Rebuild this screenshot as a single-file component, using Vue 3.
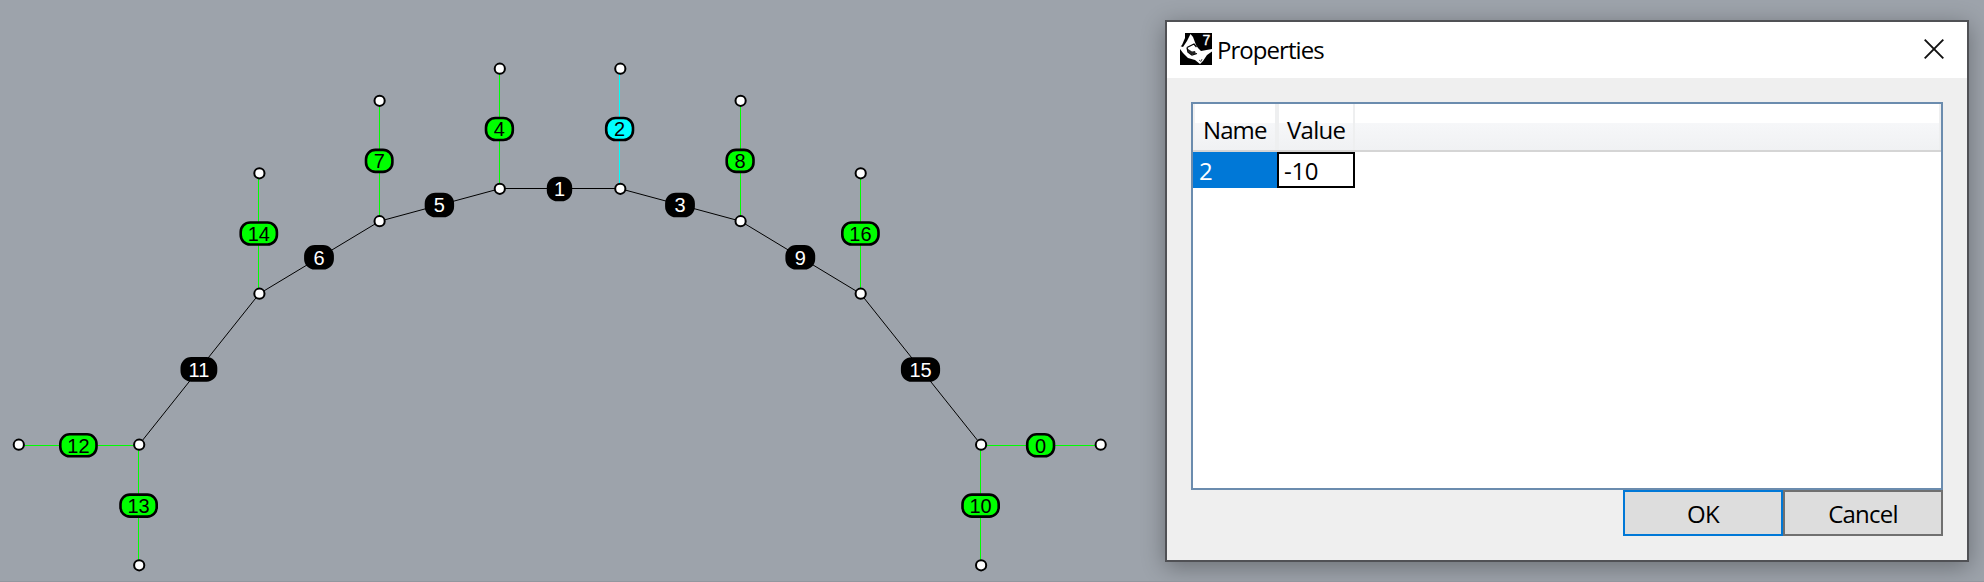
<script setup>
const lines = [
  { x1: 18.7, y1: 445.5, x2: 139, y2: 445.5, kind: 'load' },
  { x1: 138.5, y1: 445, x2: 138.5, y2: 565, kind: 'load' },
  { x1: 258.5, y1: 173, x2: 258.5, y2: 294, kind: 'load' },
  { x1: 379.5, y1: 101, x2: 379.5, y2: 221, kind: 'load' },
  { x1: 499.5, y1: 69, x2: 499.5, y2: 189, kind: 'load' },
  { x1: 619.5, y1: 69, x2: 619.5, y2: 189, kind: 'picked' },
  { x1: 740.5, y1: 101, x2: 740.5, y2: 221, kind: 'load' },
  { x1: 860.5, y1: 173, x2: 860.5, y2: 294, kind: 'load' },
  { x1: 980.5, y1: 445, x2: 980.5, y2: 565, kind: 'load' },
  { x1: 981, y1: 445.5, x2: 1100, y2: 445.5, kind: 'load' },
  { x1: 139, y1: 444.7, x2: 259.3, y2: 293.7, kind: 'edge' },
  { x1: 259.3, y1: 293.7, x2: 379.7, y2: 221.2, kind: 'edge' },
  { x1: 379.7, y1: 221.2, x2: 499.8, y2: 188.7, kind: 'edge' },
  { x1: 499.8, y1: 188.5, x2: 620.2, y2: 188.5, kind: 'edge' },
  { x1: 620.2, y1: 188.7, x2: 740.6, y2: 221.2, kind: 'edge' },
  { x1: 740.6, y1: 221.2, x2: 860.6, y2: 293.7, kind: 'edge' },
  { x1: 860.6, y1: 293.7, x2: 981, y2: 444.7, kind: 'edge' }
]
const nodes = [
  [18.8, 444.7], [139.2, 444.7], [139.2, 565.3], [259.4, 173.3], [259.4, 293.7],
  [379.6, 100.8], [379.6, 221.2], [499.8, 68.7], [499.8, 188.8], [620.3, 68.7],
  [620.3, 188.8], [740.6, 100.8], [740.6, 221.2], [860.7, 173.3], [860.7, 293.7],
  [981.1, 444.7], [981.1, 565.3], [1100.7, 444.7]
]
const labels = [
  { t: '12', x: 78.4, y: 445.3, w: 38.8, k: 'load' },
  { t: '13', x: 138.6, y: 505.6, w: 38.8, k: 'load' },
  { t: '14', x: 258.8, y: 233.5, w: 38.8, k: 'load' },
  { t: '7', x: 379.2, y: 160.9, w: 29, k: 'load' },
  { t: '4', x: 499.4, y: 129, w: 29.4, k: 'load' },
  { t: '2', x: 619.6, y: 129, w: 29.4, k: 'picked' },
  { t: '8', x: 740.1, y: 160.9, w: 29.4, k: 'load' },
  { t: '16', x: 860.4, y: 233.5, w: 38.8, k: 'load' },
  { t: '10', x: 980.6, y: 505.6, w: 38.8, k: 'load' },
  { t: '0', x: 1040.6, y: 445.3, w: 29.4, k: 'load' },
  { t: '11', x: 198.9, y: 369.4, w: 36.8, k: 'edge' },
  { t: '6', x: 319, y: 257.3, w: 29.8, k: 'edge' },
  { t: '5', x: 439.4, y: 205, w: 29.4, k: 'edge' },
  { t: '1', x: 559.5, y: 189, w: 25.4, k: 'edge' },
  { t: '3', x: 680, y: 205, w: 29.8, k: 'edge' },
  { t: '9', x: 800.3, y: 257.3, w: 29.8, k: 'edge' },
  { t: '15', x: 920.5, y: 369.5, w: 39.2, k: 'edge' }
]
</script>

<template>
  <main class="viewport">
    <svg class="graph" width="1984" height="582" viewBox="0 0 1984 582">
      <line v-for="(l, i) in lines" :key="'l' + i" :x1="l.x1" :y1="l.y1" :x2="l.x2" :y2="l.y2" :class="['line', l.kind]" />
      <circle v-for="(n, i) in nodes" :key="'n' + i" :cx="n[0]" :cy="n[1]" r="5.1" class="node" />
      <g v-for="l in labels" :key="l.t" :class="['tag', l.k]">
        <rect :x="l.x - l.w / 2 + 1.3" :y="l.y - 11" :width="l.w - 2.6" height="22" rx="9.4" />
        <text :x="l.x" :y="l.y + 7.4">{{ l.t }}</text>
      </g>
    </svg>

    <section class="dialog">
      <header class="titlebar">
        <svg class="logo" width="32" height="32" viewBox="0 0 32 32">
          <rect width="32" height="32" fill="#000" />
          <path d="M0 0H5L5 5 2 12 0 14Z" fill="#fff" />
          <path d="M10.5 1L13 4 16 12 18 15 21 18 32 16V18.5L27 22 23 28 20 31 15 27 8 25 3 20 0 16V13L3 14 7 8 9 4Z" fill="#fff" />
          <path d="M7 14.5L14 11 16.5 14M7 14.5L8 19 12 22 17 20.5" fill="none" stroke="#000" stroke-width="1.3" />
          <path d="M8 16L12 18.5 15 18 16 21 11 21.5 8 19Z" fill="#222" />
          <path d="M19 27L21 28.5 22 26" fill="none" stroke="#555" stroke-width="1" />
          <text x="22.6" y="12" class="logo-num">7</text>
        </svg>
        <h1 class="title">Properties</h1>
        <svg class="close" width="20" height="20" viewBox="0 0 20 20">
          <path d="M.7.7L19.3 19.3M19.3.7L.7 19.3" fill="none" stroke="#111" stroke-width="1.9" />
        </svg>
      </header>
      <div class="content">
        <div class="grid">
          <div class="head">
            <div class="col name"><span class="t-name">Name</span></div>
            <div class="col value"><span class="t-value">Value</span></div>
            <div class="col rest"></div>
          </div>
          <div class="row">
            <div class="cell selected">2</div>
            <div class="cell editing">-10</div>
          </div>
        </div>
        <footer class="actions">
          <button class="btn ok">OK</button>
          <button class="btn cancel">Cancel</button>
        </footer>
      </div>
    </section>
  </main>
</template>

<style>
body { background: #9da3ab; overflow: hidden; }
</style>

<style scoped>
.viewport {
  position: relative;
  box-sizing: border-box;
  width: 1984px;
  height: 582px;
  overflow: hidden;
  background: #9da3ab;
  border-bottom: 1px solid #92979f;
  font-family: "Open Sans", "Noto Sans", sans-serif;
}
.graph { display: block; }
.line { stroke-width: 1; }
.line.load { stroke: #00ff00; }
.line.picked { stroke: #00ffff; }
.line.edge { stroke: #000; }
.node { fill: #fff; stroke: #000; stroke-width: 2; }
.tag rect { stroke: #000; stroke-width: 2.6; }
.tag text { font: 20px "Liberation Sans", Arial, sans-serif; text-anchor: middle; }
.tag.load rect { fill: #00ff00; }
.tag.picked rect { fill: #00ffff; }
.tag.edge rect { fill: #000; }
.tag.edge text { fill: #fff; }
.dialog {
  position: absolute;
  left: 1165px;
  top: 20px;
  display: flex;
  flex-direction: column;
  box-sizing: border-box;
  width: 804px;
  height: 542px;
  border: 2px solid #505155;
  background: #efefef;
  box-shadow: 0 5px 22px rgba(0, 0, 0, .32);
  color: #000;
  font-size: 24px;
}
.titlebar {
  display: flex;
  align-items: center;
  height: 56px;
  padding: 0 23px 0 13px;
  background: #fff;
}
.logo { margin-top: -2px; }
.logo-num { font: 14px "Liberation Sans", Arial, sans-serif; fill: #fff; stroke: #fff; stroke-width: .3; }
.title { margin: 0 auto 0 5px; font-size: 24px; font-weight: 400; line-height: 32px; letter-spacing: -.95px; }
.close { margin-top: -2px; }
.content { display: flex; flex-direction: column; padding: 24px 24px 0; }
.grid { box-sizing: border-box; height: 388px; border: 2px solid #6b8cae; background: #fff; }
.head {
  display: flex;
  box-sizing: border-box;
  height: 48px;
  border-bottom: 2px solid #d5d5d5;
  background: linear-gradient(#fff 0, #fff 19px, #f6f7f9 19px, #f0f1f3 46px);
}
.col { box-sizing: border-box; border-right: 2px solid #eeeff0; line-height: 51px; white-space: nowrap; }
.name { width: 84px; border-left: 2px solid #f1f1f1; padding-left: 8px; }
.value { width: 78px; border-left: 2px solid #eeeff0; padding-left: 8px; }
.rest { flex: 1; }
.t-name { letter-spacing: -.9px; }
.t-value { letter-spacing: -.7px; }
.row { display: flex; height: 36px; line-height: 37px; }
.cell { box-sizing: border-box; }
.selected { width: 84px; padding-left: 6px; background: #0078d7; color: #fff; }
.editing { width: 78px; padding-left: 5px; border: 2px solid #000; line-height: 33px; letter-spacing: -.3px; }
.actions { display: flex; justify-content: flex-end; }
.btn {
  box-sizing: border-box;
  width: 160px;
  height: 46px;
  padding: 0;
  border: 2px solid #707070;
  background: #ddd;
  color: #000;
  font: 24px "Open Sans", "Noto Sans", sans-serif;
  letter-spacing: -.75px;
}
.ok { border-color: #0078d7; }
</style>
